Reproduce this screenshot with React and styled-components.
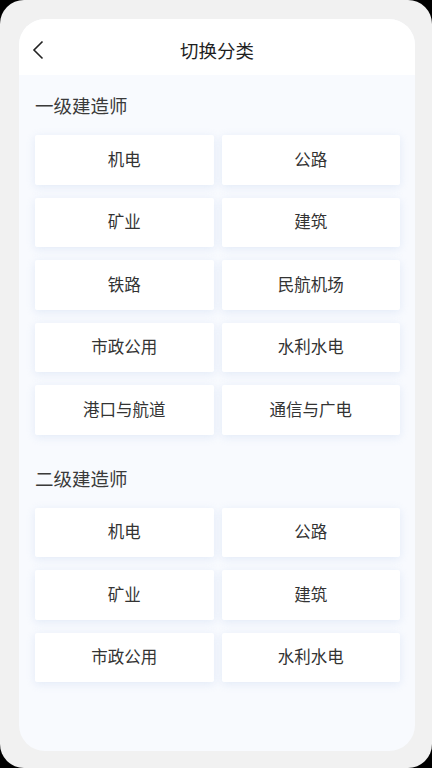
import styled, { createGlobalStyle } from "styled-components";

const groups = [
  {
    title: "一级建造师",
    items: ["机电", "公路", "矿业", "建筑", "铁路", "民航机场", "市政公用", "水利水电", "港口与航道", "通信与广电"],
  },
  {
    title: "二级建造师",
    items: ["机电", "公路", "矿业", "建筑", "市政公用", "水利水电"],
  },
];

function App() {
  return (
    <>
      <GlobalStyle />
      <Screen>
        <Card>
          <Header>
            <BackButton aria-label="返回">
              <svg width="12" height="20" viewBox="0 0 12 20" fill="none">
                <path d="M10.5 1.5L2 10l8.5 8.5" stroke="#222" strokeWidth="1.6" />
              </svg>
            </BackButton>
            <Title>切换分类</Title>
            <span />
          </Header>

          <Body>
            {groups.map(group => (
              <Section key={group.title}>
                <SectionTitle>{group.title}</SectionTitle>
                <Grid>
                  {group.items.map((item, i) => (
                    <Option key={i}>{item}</Option>
                  ))}
                </Grid>
              </Section>
            ))}
          </Body>
        </Card>
      </Screen>
    </>
  );
}

export default App;

const GlobalStyle = createGlobalStyle`
  html, body {
    margin: 0;
    padding: 0;
    background: #000;
  }
  body {
    font-family: "Noto Sans CJK SC", "Noto Sans", sans-serif;
  }
`;

const Screen = styled.div`
  width: 432px;
  height: 768px;
  box-sizing: border-box;
  padding: 19px 17px 17px 19px;
  background: #f1f1f1;
  border-radius: 24px;
  display: flex;
`;

const Card = styled.div`
  flex: 1;
  display: flex;
  flex-direction: column;
  background: #f8fafe;
  border-radius: 26px;
  overflow: hidden;
`;

const Header = styled.div`
  height: 56px;
  box-sizing: border-box;
  padding-top: 6px;
  flex-shrink: 0;
  background: #fff;
  display: grid;
  grid-template-columns: 44px 1fr 44px;
  align-items: center;
`;

const BackButton = styled.button`
  border: none;
  background: transparent;
  padding: 0 0 0 13px;
  height: 100%;
  display: flex;
  align-items: center;
  cursor: pointer;
`;

const Title = styled.div`
  text-align: center;
  font-size: 18.5px;
  font-weight: 400;
  color: #1f1f1f;
`;

const Body = styled.div`
  padding: 0 15px 0 16px;
  display: flex;
  flex-direction: column;
  gap: 13px;
`;

const Section = styled.div`
  display: flex;
  flex-direction: column;
`;

const SectionTitle = styled.div`
  height: 60px;
  line-height: 60px;
  font-size: 18.5px;
  color: #3a3a3a;
`;

const Grid = styled.div`
  display: grid;
  grid-template-columns: 1fr 1fr;
  column-gap: 8px;
  row-gap: 13px;
`;

const Option = styled.div`
  height: 49.5px;
  box-sizing: border-box;
  padding-bottom: 2px;
  display: flex;
  align-items: center;
  justify-content: center;
  background: #fff;
  border-radius: 2px;
  box-shadow: 0 2px 8px rgba(200, 215, 240, 0.45);
  font-size: 16.5px;
  color: #333;
  cursor: pointer;
`;
